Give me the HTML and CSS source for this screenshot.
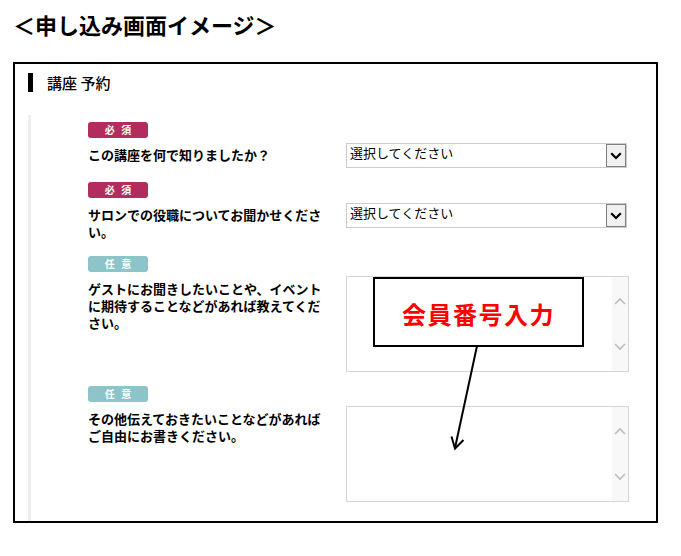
FILE: index.html
```html
<!DOCTYPE html>
<html lang="ja">
<head>
<meta charset="utf-8">
<title>申し込み画面イメージ</title>
<link rel="stylesheet" href="styles.css">
</head>
<body>
<h1 class="title">＜申し込み画面イメージ＞</h1>
<section class="panel">
  <h2 class="panel-head"><span class="bar"></span>講座 予約</h2>
  <div class="form">
    <div class="row">
      <div class="label"><span class="badge req">必 須</span><p class="q">この講座を何で知りましたか？</p></div>
      <div class="select"><span class="value">選択してください</span><span class="arrow"><svg width="12" height="8" viewBox="0 0 12 8"><polyline points="1.2,1.2 6,6 10.8,1.2" fill="none" stroke="#000" stroke-width="2.2"/></svg></span></div>
    </div>
    <div class="row">
      <div class="label"><span class="badge req">必 須</span><p class="q">サロンでの役職についてお聞かせください。</p></div>
      <div class="select"><span class="value">選択してください</span><span class="arrow"><svg width="12" height="8" viewBox="0 0 12 8"><polyline points="1.2,1.2 6,6 10.8,1.2" fill="none" stroke="#000" stroke-width="2.2"/></svg></span></div>
    </div>
    <div class="row">
      <div class="label"><span class="badge opt">任 意</span><p class="q">ゲストにお聞きしたいことや、イベントに期待することなどがあれば教えてください。</p></div>
      <div class="textarea"><div class="scroll"><svg width="12" height="8" viewBox="0 0 12 8"><polyline points="1,7 6,2 11,7" fill="none" stroke="#bdbdbd" stroke-width="1.6"/></svg><svg width="12" height="8" viewBox="0 0 12 8"><polyline points="1,1 6,6 11,1" fill="none" stroke="#bdbdbd" stroke-width="1.6"/></svg></div></div>
    </div>
    <div class="row">
      <div class="label"><span class="badge opt">任 意</span><p class="q">その他伝えておきたいことなどがあればご自由にお書きください。</p></div>
      <div class="textarea"><div class="scroll"><svg width="12" height="8" viewBox="0 0 12 8"><polyline points="1,7 6,2 11,7" fill="none" stroke="#bdbdbd" stroke-width="1.6"/></svg><svg width="12" height="8" viewBox="0 0 12 8"><polyline points="1,1 6,6 11,1" fill="none" stroke="#bdbdbd" stroke-width="1.6"/></svg></div></div>
    </div>
  </div>
</section>
<div class="callout">会員番号入力</div>
<svg class="pointer" width="50" height="115" viewBox="0 0 50 115"><line x1="37" y1="6" x2="15" y2="108" stroke="#000" stroke-width="2"/><polyline points="11.5,96.5 15,108.5 23.5,100" fill="none" stroke="#000" stroke-width="2"/></svg>
</body>
</html>
```
FILE: styles.css
```css
* { box-sizing: border-box; }
html, body { margin: 0; padding: 0; }
body {
  position: relative;
  width: 681px;
  height: 556px;
  background: #fff;
  color: #000;
  font-family: "Noto Sans CJK JP", "Noto Sans", sans-serif;
  overflow: hidden;
}
.title {
  margin: 0;
  padding: 10px 0 0 13px;
  font-size: 22px;
  line-height: 28px;
  font-weight: 700;
}
.panel {
  margin: 24px 0 0 13px;
  width: 645px;
  border: 2px solid #000;
}
.panel-head {
  margin: 0;
  padding: 9px 0 0 13px;
  display: flex;
  align-items: center;
  font-size: 15px;
  line-height: 19px;
  font-weight: 500;
}
.bar {
  width: 5px;
  height: 19px;
  background: #000;
  margin-right: 14px;
}
.form {
  margin: 23px 0 0 13px;
  border-left: 3px solid #eeeeee;
  padding: 7px 0 19px 57px;
  display: flex;
  flex-direction: column;
  gap: 14px;
}
.row {
  display: grid;
  grid-template-columns: 258px 283px;
  align-items: start;
}
.label {
  padding-bottom: 2px;
}
.badge {
  display: flex;
  align-items: center;
  justify-content: center;
  width: 60px;
  height: 16px;
  border-radius: 3px;
  color: #fff;
  font-size: 10px;
  font-weight: 700;
  line-height: 16px;
  letter-spacing: 2px;
  padding-left: 2px;
}
.req { background: #b22c5e; }
.opt { background: #8dc4ca; }
.q {
  margin: 8px 0 0;
  width: 240px;
  font-size: 13px;
  line-height: 17px;
  font-weight: 700;
}
.select {
  margin-top: 21px;
  width: 281px;
  height: 25px;
  border: 1px solid #cccccc;
  display: flex;
  justify-content: space-between;
  align-items: flex-start;
  background: #fff;
}
.value {
  padding: 0 0 0 3px;
  font-size: 13px;
  line-height: 17px;
}
.arrow {
  width: 20px;
  height: 23px;
  border: 1px solid #808080;
  background: #f0f0f0;
  display: flex;
  align-items: center;
  justify-content: center;
}
.arrow svg { display: block; }
.textarea {
  margin-top: 20px;
  width: 283px;
  height: 96px;
  border: 1px solid #d6d6d6;
  display: flex;
  justify-content: flex-end;
  background: #fff;
}
.scroll {
  width: 16px;
  background: #f8f8f8;
  display: flex;
  flex-direction: column;
  justify-content: space-between;
  align-items: center;
  padding: 20px 0 20px;
}
.scroll svg { display: block; }
.callout {
  position: absolute;
  left: 373px;
  top: 277px;
  width: 211px;
  height: 70px;
  border: 2px solid #000;
  background: #fff;
  color: #ff0000;
  font-size: 24px;
  font-weight: 700;
  letter-spacing: 1.5px;
  display: flex;
  align-items: center;
  justify-content: center;
  padding-top: 2px;
}
.pointer {
  position: absolute;
  left: 440px;
  top: 340px;
}
```
